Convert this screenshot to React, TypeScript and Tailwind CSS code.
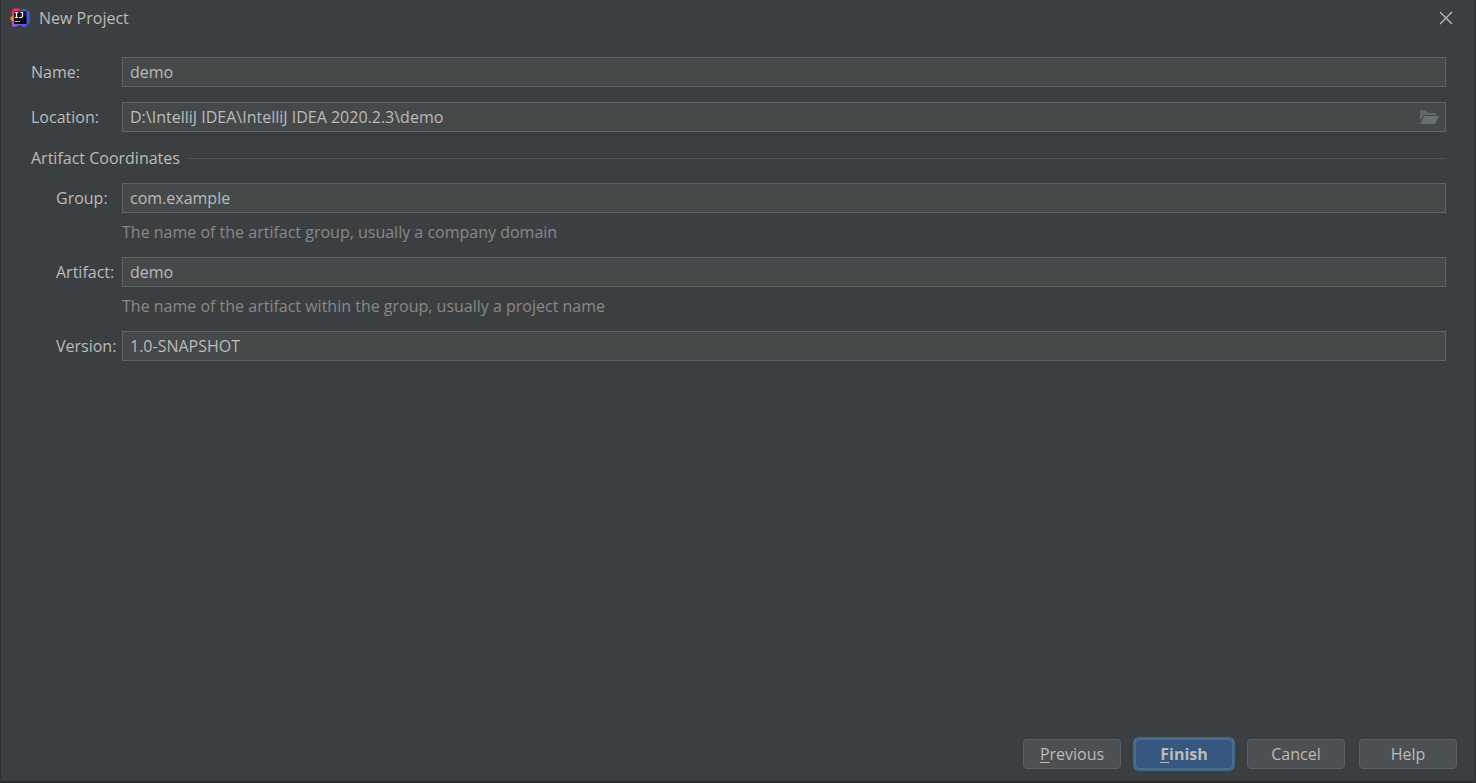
import { useState } from 'react';
import type { ReactNode } from 'react';

function IdeaLogo() {
  return (
    <svg width="20" height="20" viewBox="0 0 20 20" aria-hidden="true">
      <defs>
        <linearGradient id="idea-pink" x1="0" y1="0" x2="0" y2="1">
          <stop offset="0" stopColor="#fe2857" />
          <stop offset="0.5" stopColor="#f0365f" />
          <stop offset="1" stopColor="#b84ce0" />
        </linearGradient>
        <linearGradient id="idea-blue" x1="0" y1="0" x2="1" y2="1">
          <stop offset="0" stopColor="#2f6df0" />
          <stop offset="1" stopColor="#4450d8" />
        </linearGradient>
        <linearGradient id="idea-base" x1="0" y1="0" x2="1" y2="0">
          <stop offset="0" stopColor="#b34bd8" />
          <stop offset="1" stopColor="#3f5ff0" />
        </linearGradient>
        <linearGradient id="idea-tile" x1="0" y1="0" x2="0" y2="1">
          <stop offset="0" stopColor="#2c2a36" />
          <stop offset="0.5" stopColor="#08080c" />
        </linearGradient>
      </defs>
      <path d="M10 3l4-2.500 5.500 3.500.500 10.500L15.500 19 9 16z" fill="url(#idea-blue)" />
      <path d="M2 2.500L4 .500h5.500L12 5 5 16l-3-1z" fill="url(#idea-pink)" />
      <path d="M0 9.500L3.500 7v7L1 12.500z" fill="#fc801d" />
      <path d="M2 14h14v4l-2 1-4-2-6 2-2-1z" fill="url(#idea-base)" />
      <rect x="4" y="3" width="12.500" height="13" fill="url(#idea-tile)" />
      <path
        d="M5 4.500h3M6.500 4.500v5M5 9.500h3"
        fill="none"
        stroke="#fff"
        strokeWidth="1.200"
      />
      <path d="M10.500 4.500H13M12.500 4.500V8.500L11.500 9.500H9" fill="none" stroke="#fff" strokeWidth="1.200" />
      <path d="M5 13.500h5" stroke="#a4a4a8" strokeWidth="1" />
    </svg>
  );
}

function FolderIcon() {
  return (
    <svg width="20" height="16" viewBox="0 0 20 16" aria-hidden="true">
      <path d="M1 12V1h6l2 3h8v2H5z" fill="#5f676b" />
      <path d="M5.500 7H20l-4 8H1z" fill="#667074" />
    </svg>
  );
}

type FieldProps = {
  id: string;
  label: string;
  initial: string;
  indent?: boolean;
  hint?: string;
  action?: ReactNode;
};

function Field({ id, label, initial, indent, hint, action }: FieldProps) {
  const [value, setValue] = useState(initial);
  return (
    <div>
      <div className="flex items-center">
        <label htmlFor={id} className={indent ? 'w-[91px] shrink-0 pl-[25px]' : 'w-[91px] shrink-0'}>
          {label}
        </label>
        <div className="flex h-[30px] min-w-0 flex-1 items-center border border-[#616465] bg-[#45494a] focus-within:border-[#466d94]">
          <input
            id={id}
            type="text"
            value={value}
            onChange={(e) => setValue(e.target.value)}
            className="h-full min-w-0 flex-1 bg-transparent px-[7px] outline-none"
          />
          {action}
        </div>
      </div>
      {hint && <p className="mt-2 pl-[91px] text-[#878989]">{hint}</p>}
    </div>
  );
}

const buttonClass = 'h-[30px] w-[98px] rounded-[4px] border border-[#5e6162] bg-[#4c5052]';

export default function App() {
  return (
    <div className="flex min-h-screen flex-col border-r-2 border-b-2 border-l border-r-[#333638] border-b-[#2b2b2e] border-l-[#303335] bg-[#3c3f41] font-['Open_Sans','Noto_Sans',sans-serif] text-[16px] leading-[22px] text-[#bbbbbb]">
      <header className="flex h-9 items-center pr-[20px] pl-[9px]">
        <IdeaLogo />
        <h1 className="ml-[9px] flex-1">New Project</h1>
        <button type="button" aria-label="Close" className="flex size-[16px] items-center justify-center">
          <svg width="14" height="14" viewBox="0 0 14 14" aria-hidden="true">
            <path d="M1 1l12 12M13 1L1 13" stroke="#bfc0c1" strokeWidth="1.200" />
          </svg>
        </button>
      </header>

      <main className="flex-1 pt-[21px] pr-[28px] pl-[30px]">
        <div className="flex flex-col gap-[15px]">
          <Field id="name" label="Name:" initial="demo" />
          <Field
            id="location"
            label="Location:"
            initial={'D:\\IntelliJ IDEA\\IntelliJ IDEA 2020.2.3\\demo'}
            action={
              <button type="button" aria-label="Browse" className="mr-[6px]">
                <FolderIcon />
              </button>
            }
          />
        </div>

        <div className="mt-[15px] flex items-center gap-2">
          <h2>Artifact Coordinates</h2>
          <div className="h-px flex-1 bg-[#515455]" />
        </div>

        <div className="mt-[14px] flex flex-col gap-[14px]">
          <Field
            id="group"
            label="Group:"
            initial="com.example"
            indent
            hint="The name of the artifact group, usually a company domain"
          />
          <Field
            id="artifact"
            label="Artifact:"
            initial="demo"
            indent
            hint="The name of the artifact within the group, usually a project name"
          />
          <Field id="version" label="Version:" initial="1.0-SNAPSHOT" indent />
        </div>
      </main>

      <footer className="flex justify-end gap-[14px] pr-[17px] pb-[12px]">
        <button type="button" className={buttonClass}>
          <span className="underline underline-offset-2">P</span>revious
        </button>
        <button
          type="button"
          className="h-[30px] w-[98px] rounded-[4px] border border-[#4c708c] bg-[#365880] font-bold ring-2 ring-[#43698e]"
        >
          <span className="underline underline-offset-2">F</span>inish
        </button>
        <button type="button" className={buttonClass}>
          Cancel
        </button>
        <button type="button" className={buttonClass}>
          Help
        </button>
      </footer>
    </div>
  );
}
